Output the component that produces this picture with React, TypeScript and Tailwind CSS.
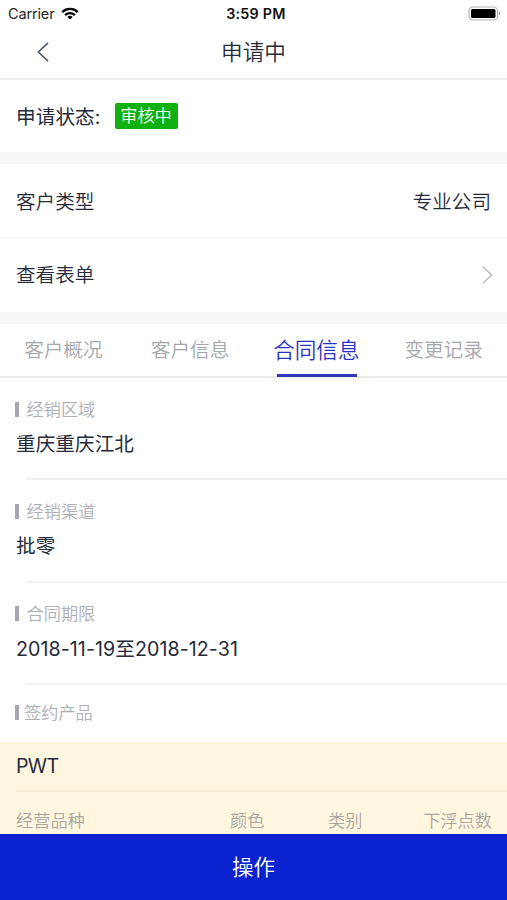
import React, { useState } from 'react';

interface Field {
  label: string;
  value: string;
}

const tabs = ['客户概况', '客户信息', '合同信息', '变更记录'];

const fields: Field[] = [
  { label: '经销区域', value: '重庆重庆江北' },
  { label: '经销渠道', value: '批零' },
  { label: '合同期限', value: '2018-11-19至2018-12-31' },
];

const StatusBar: React.FC = () => (
  <div className="flex h-7 shrink-0 items-center justify-between pl-[8px] pr-[6px] text-black">
    <div className="flex w-[120px] items-center gap-[6.5px]">
      <span className="text-[14.5px] font-normal leading-none tracking-[-0.15px] text-[#222]">Carrier</span>
      <svg width="18" height="13" viewBox="0 0 18 13" fill="none" stroke="currentColor" strokeWidth="2.3" className="-mt-px">
        <path d="M1.2 5.1C5.5.9 12.5.9 16.8 5.1" />
        <path d="M4.1 8.1C6.9 5.5 11.1 5.5 13.9 8.1" />
        <path d="M9 12.6 6.3 9.9C7.8 8.5 10.2 8.5 11.7 9.9Z" fill="currentColor" stroke="none" />
      </svg>
    </div>
    <span className="ml-[3px] text-[14.3px] font-semibold leading-none tracking-[0.25px] text-[#111]">3:59 PM</span>
    <div className="flex w-[120px] justify-end">
      <svg width="33" height="15" viewBox="0 0 33 15" className="-mt-[2px]">
        <rect x="1" y="1" width="28.5" height="13" rx="3.8" fill="#fff" stroke="#b4b4b4" strokeWidth="1.2" />
        <rect x="3" y="3" width="24.5" height="9" rx="1.6" fill="#000" />
        <path d="M31 5.5c1.6.6 1.6 3.4 0 4z" fill="#999" />
      </svg>
    </div>
  </div>
);

const FieldLabel: React.FC<{ text: string; tight?: boolean }> = ({ text, tight }) => (
  <div className={`flex h-[26px] items-center ${tight ? 'gap-[5px]' : 'gap-[7.5px]'}`}>
    <span className="h-[15px] w-1 bg-[#a5a6af]" />
    <span className="pt-px text-[17.2px] font-[350] leading-[26px] text-[#adafb5]">{text}</span>
  </div>
);

const App: React.FC = () => {
  const [activeTab, setActiveTab] = useState(2);

  return (
    <div className="flex h-[900px] w-full flex-col overflow-hidden bg-white font-['Inter','Noto_Sans_CJK_SC',sans-serif] text-[19.6px] font-[350] text-[#252a3a]">
      <StatusBar />

      <header className="grid h-[52px] shrink-0 grid-cols-[1fr_auto_1fr] items-center border-b-2 border-[#eeeeef] pb-[2px]">
        <button className="pl-[37px]">
          <svg width="12" height="20" viewBox="0 0 12 20" fill="none" stroke="#50566b" strokeWidth="1.6">
            <path d="M11 .8 1.4 10 11 19.2" />
          </svg>
        </button>
        <h1 className="text-[21.6px] leading-8">申请中</h1>
      </header>

      <section className="flex h-[72px] shrink-0 items-center pl-4">
        <span className="pt-[3px] font-normal tracking-[0.1px]">申请状态:</span>
        <span className="ml-[14px] flex h-[26px] w-[63px] items-center justify-center rounded-[2px] bg-[#0fb010] text-[17.2px] leading-none text-white">
          审核中
        </span>
      </section>

      <div className="h-3 shrink-0 bg-[#f8f8f8]" />

      <section className="shrink-0">
        <div className="flex h-[75px] items-center justify-between border-b-2 border-[#f7f7f7] px-4 pt-[5px]">
          <span>客户类型</span>
          <span>专业公司</span>
        </div>
        <button className="flex h-[73px] w-full items-center justify-between pl-4 pr-[14px]">
          <span className="pt-px">查看表单</span>
          <svg width="11" height="18" viewBox="0 0 11 18" fill="none" stroke="#b9babd" strokeWidth="1.5" className="-mt-[2px]">
            <path d="M1 .8 9.7 9 1 17.2" />
          </svg>
        </button>
      </section>

      <div className="h-3 shrink-0 bg-[#f8f8f8]" />

      <nav className="grid h-[54px] shrink-0 grid-cols-4 border-b-2 border-[#ebebec]">
        {tabs.map((tab, i) => (
          <button key={tab} onClick={() => setActiveTab(i)} className="relative flex items-center justify-center">
            {activeTab === i ? (
              <>
                <span className="-ml-px text-[21.6px] text-[#2932c4]">{tab}</span>
                <span className="absolute -bottom-px left-1/2 h-[3px] w-20 -translate-x-1/2 bg-[#3139b8]" />
              </>
            ) : (
              <span className="pt-[2px] text-[#a5a7ad]">{tab}</span>
            )}
          </button>
        ))}
      </nav>

      <main className="flex min-h-0 flex-1 flex-col overflow-hidden">
        {fields.map((field) => (
          <div key={field.label} className="h-[102.3px] shrink-0 pl-[15px]">
            <div className="pt-[18px]">
              <FieldLabel text={field.label} />
            </div>
            <div className="ml-px mt-[7px] h-[30px] font-normal leading-[31px] tracking-[0.08px]">{field.value}</div>
            <div className="ml-[10px] mt-[19.4px] h-[2px] bg-[#f1f1f2]" />
          </div>
        ))}

        <div className="h-[57px] shrink-0 pl-[15px] pt-[15px]">
          <FieldLabel text="签约产品" tight />
        </div>

        <div className="flex-1 bg-[#fff6e0] pl-4">
          <div className="h-[50px] border-b-2 border-[#f3ecd9] font-normal leading-[49px] tracking-[-0.7px]">PWT</div>
          <div className="flex h-[58px] items-center pr-[15px] text-[17.2px] text-[#a9a6a1]">
            <span className="w-[214px]">经营品种</span>
            <span className="w-[98px]">颜色</span>
            <span>类别</span>
            <span className="ml-auto">下浮点数</span>
          </div>
        </div>
      </main>

      <button className="h-[66px] shrink-0 bg-[#0a22d0] text-[21.6px] text-white">操作</button>
    </div>
  );
};

export default App;
